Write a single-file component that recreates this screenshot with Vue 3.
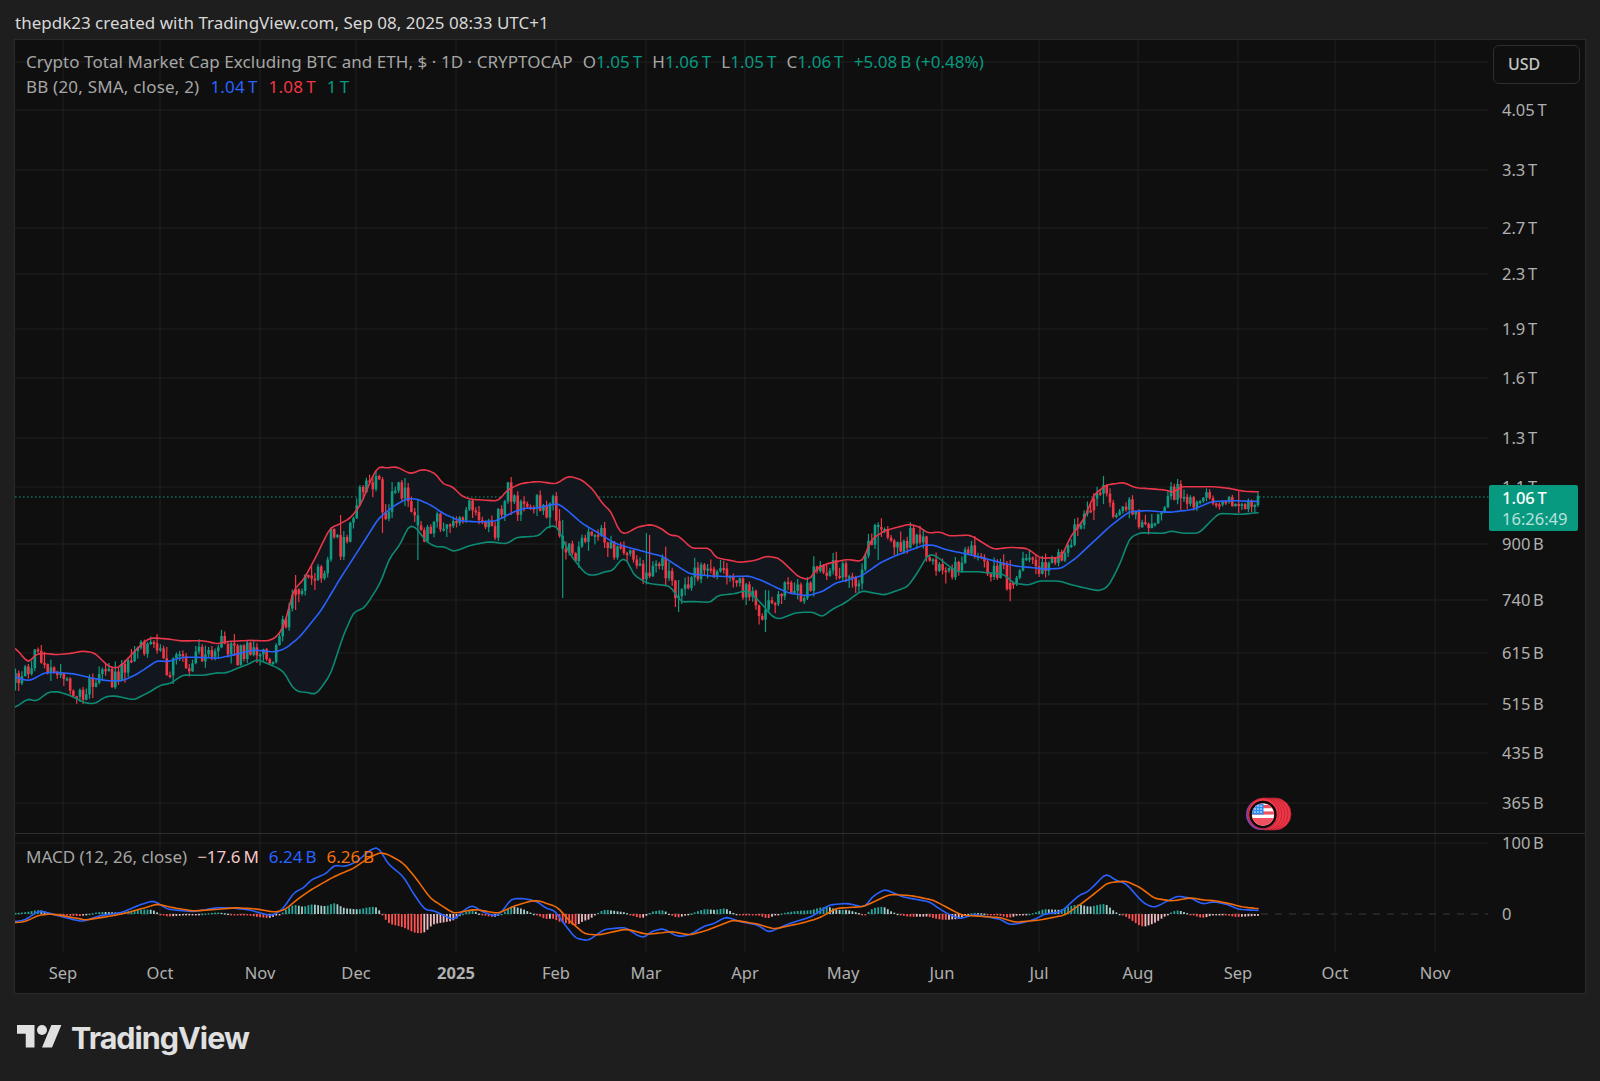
<script setup>
const GRID_X = [63, 160, 260, 356, 456, 556, 646, 745, 843, 942, 1039, 1138, 1238, 1335, 1435]
const MONTHS = ['Sep', 'Oct', 'Nov', 'Dec', '2025', 'Feb', 'Mar', 'Apr', 'May', 'Jun', 'Jul', 'Aug', 'Sep', 'Oct', 'Nov']
const timeLabels = GRID_X.map((x, i) => ({ x, t: MONTHS[i], bold: MONTHS[i] === '2025' }))
const GRID_Y = [62, 110, 170, 228, 274, 329, 378, 438, 487, 544, 600, 653, 704, 753, 803, 843]
const priceLabels = [
  [110, '4.05\u202FT'], [170, '3.3\u202FT'], [228, '2.7\u202FT'], [274, '2.3\u202FT'], [329, '1.9\u202FT'], [378, '1.6\u202FT'],
  [438, '1.3\u202FT'], [487, '1.1\u202FT'], [544, '900\u202FB'], [600, '740\u202FB'], [653, '615\u202FB'], [704, '515\u202FB'],
  [753, '435\u202FB'], [803, '365\u202FB'], [843, '100\u202FB'], [914, '0']
].map(([y, t]) => ({ y, t }))

// Curves are read off three crops of the reference and mapped back to page pixels.
function stitch(a, ax, ay, b, bx, by, c, cx, cy) {
  const m = (pts, ox, oy) => pts.map(([x, y]) => [ox + x / 2.8, oy + y / 3])
  return [
    ...m(a, ax, ay).filter(p => p[0] < 540),
    ...m(b, bx, by).filter(p => p[0] >= 540 && p[0] < 1040),
    ...m(c, cx, cy).filter(p => p[0] >= 1040)
  ]
}
const price = (a, b, c) => stitch(a, 0, 440, b, 540, 440, c, 1040, 450)
const osc = (a, b, c) => stitch(a, 0, 820, b, 540, 820, c, 1040, 780)

const upperPts = price(
  [[42,622],[60,645],[80,670],[100,642],[120,640],[160,644],[200,640],[230,633],[265,638],[285,660],[305,680],[330,685],[350,665],[380,630],[410,600],[425,593],[470,597],[510,603],[570,602],[610,612],[630,605],[700,601],[750,603],[770,595],[790,570],[810,505],[820,450],[850,420],[880,360],[925,262],[940,258],[980,235],[1010,195],[1040,115],[1060,78],[1080,84],[1110,80],[1150,102],[1185,87],[1220,100],[1240,133],[1265,138],[1295,170],[1320,178],[1395,183],[1420,150],[1460,130],[1500,125],[1540,130]],
  [[0,125],[45,132],[80,108],[115,118],[150,150],[175,192],[200,215],[222,277],[240,282],[270,262],[310,253],[340,265],[365,288],[385,285],[425,325],[480,325],[488,352],[560,367],[600,362],[635,348],[670,355],[725,412],[755,420],[775,385],[800,372],[860,358],[905,365],[925,300],[965,272],[1035,252],[1065,262],[1085,280],[1120,275],[1145,288],[1205,285],[1270,328],[1315,322],[1365,325],[1399,353]],
  [[0,325],[60,322],[85,260],[125,205],[150,135],[185,105],[235,97],[265,113],[355,120],[375,130],[390,110],[485,110],[530,115],[570,124],[622,126]]
)
const midPts = price(
  [[42,708],[60,718],[85,722],[125,698],[160,697],[210,702],[260,715],[300,722],[340,723],[380,705],[440,662],[470,665],[510,652],[560,652],[610,655],[660,643],[710,630],[770,636],[800,625],[840,590],[900,510],[950,420],[1010,320],[1060,235],[1100,200],[1140,175],[1170,178],[1210,197],[1240,220],[1285,242],[1340,246],[1390,243],[1430,220],[1465,205],[1510,204]],
  [[0,202],[50,190],[70,205],[120,252],[165,280],[210,310],[250,323],[300,337],[345,350],[380,375],[420,402],[480,408],[530,410],[585,408],[625,423],[660,442],[700,460],[750,467],[790,455],[830,428],[870,418],[905,405],[950,370],[1000,345],[1075,315],[1100,315],[1140,330],[1200,343],[1280,365],[1330,378],[1399,385]],
  [[0,358],[60,355],[100,325],[150,275],[200,225],[250,185],[300,182],[365,187],[430,178],[480,155],[540,152],[622,155]]
)
const lowerPts = price(
  [[42,803],[80,775],[100,786],[135,756],[165,755],[200,768],[235,788],[265,792],[295,770],[320,767],[375,780],[420,755],[450,735],[480,730],[510,705],[570,706],[610,698],[630,700],[700,670],[720,658],[770,680],[795,695],[820,745],[840,758],[850,755],[885,764],[925,705],[960,590],[990,516],[1020,505],[1065,430],[1090,355],[1120,315],[1145,255],[1165,262],[1195,307],[1225,322],[1240,318],[1270,335],[1320,315],[1370,305],[1420,312],[1445,292],[1510,288]],
  [[0,285],[20,260],[48,257],[60,290],[85,345],[130,405],[160,405],[180,395],[205,393],[225,358],[250,358],[255,400],[300,430],[365,438],[395,487],[420,484],[480,487],[495,467],[550,460],[580,450],[620,490],[650,530],[670,538],[715,518],[765,516],[790,532],[815,510],[855,488],[900,452],[930,458],[965,465],[1030,440],[1065,385],[1085,343],[1105,345],[1165,395],[1225,395],[1300,403],[1325,430],[1370,435],[1399,422]],
  [[0,393],[55,393],[90,405],[130,415],[165,423],[190,412],[225,340],[250,265],[280,248],[350,250],[365,242],[400,250],[445,250],[500,190],[560,193],[622,187]]
)
const centerPts = price(
  [[42,730],[60,705],[100,640],[130,690],[170,725],[225,770],[260,720],[290,690],[320,720],[360,660],[420,600],[445,640],[460,690],[500,660],[530,690],[570,630],[630,610],[665,650],[710,610],[760,680],[775,600],[810,510],[830,450],[870,390],[905,390],[930,270],[955,330],[985,240],[1020,130],[1060,110],[1075,240],[1100,150],[1135,160],[1165,270],[1190,290],[1215,230],[1265,280],[1320,180],[1345,270],[1385,270],[1420,150],[1445,200],[1500,180]],
  [[0,220],[40,190],[55,300],[90,350],[150,290],[165,280],[200,330],[245,320],[265,400],[300,400],[345,370],[380,480],[420,410],[465,385],[480,410],[515,370],[550,440],[585,450],[630,530],[650,480],[685,435],[705,465],[750,450],[770,400],[830,385],[895,415],[910,350],[945,265],[1000,330],[1040,280],[1075,310],[1110,370],[1165,385],[1215,330],[1240,385],[1300,390],[1315,450],[1335,385],[1399,375]],
  [[0,350],[60,330],[85,260],[125,215],[180,120],[205,200],[240,150],[290,245],[325,195],[355,150],[390,110],[440,170],[465,130],[490,180],[530,150],[555,180],[620,145]]
)
const macdPts = osc(
  [[42,305],[70,300],[110,272],[140,280],[180,292],[230,305],[280,287],[340,278],[390,255],[430,242],[470,268],[540,275],[610,263],[660,265],[700,270],[760,288],[790,270],[825,215],[850,205],[870,180],[915,160],[935,135],[965,140],[1000,125],[1030,95],[1058,78],[1085,130],[1130,170],[1160,225],[1190,270],[1215,272],[1270,300],[1300,270],[1322,255],[1350,275],[1390,290],[1410,270],[1430,237],[1465,235],[1500,243]],
  [[0,250],[15,265],[40,270],[70,315],[100,355],[135,362],[180,328],[240,322],[270,345],[295,355],[305,337],[345,325],[385,350],[420,345],[460,318],[490,310],[520,290],[560,305],[610,315],[640,337],[700,310],[760,290],[810,255],[860,250],[910,262],[930,230],[965,208],[1020,232],[1090,245],[1130,275],[1175,297],[1215,283],[1290,298],[1315,315],[1365,305],[1399,292]],
  [[0,405],[60,395],[110,345],[135,335],[185,280],[210,300],[240,310],[290,370],[320,383],[385,348],[425,355],[455,373],[485,365],[525,373],[555,388],[620,392]]
)
const signalPts = osc(
  [[42,308],[70,305],[110,285],[145,282],[180,288],[240,300],[300,290],[350,280],[400,265],[440,252],[480,262],[540,273],[610,268],[660,263],[720,267],[770,277],[800,268],[830,240],[870,210],[935,170],[990,145],[1030,115],[1065,97],[1090,105],[1130,130],[1165,175],[1205,235],[1270,280],[1330,268],[1395,280],[1440,258],[1490,242]],
  [[0,243],[50,262],[80,300],[125,342],[165,345],[240,327],[300,343],[370,335],[420,345],[470,330],[540,300],[610,312],[655,327],[730,310],[780,295],[830,265],[905,260],[980,223],[1040,227],[1100,240],[1180,285],[1290,293],[1330,307],[1399,300]],
  [[0,420],[70,405],[130,360],[190,308],[240,303],[280,322],[320,355],[370,363],[425,353],[455,360],[490,362],[540,373],[560,380],[620,387]]
)

function at(pts, x) {
  if (x <= pts[0][0]) return pts[0][1]
  for (let i = 1; i < pts.length; i++) {
    if (x <= pts[i][0]) {
      const [x0, y0] = pts[i - 1]
      const [x1, y1] = pts[i]
      return y0 + ((y1 - y0) * (x - x0)) / (x1 - x0 || 1)
    }
  }
  return pts[pts.length - 1][1]
}

const STEP = 3.219
const days = []
for (let x = 15.5; x <= 1261; x += STEP) days.push(x)

function daily(pts) {
  const raw = days.map(x => at(pts, x))
  return raw.map((y, i) => (raw[Math.max(0, i - 1)] + 2 * y + raw[Math.min(raw.length - 1, i + 1)]) / 4)
}
const line = ys => ys.map((y, i) => `${days[i].toFixed(1)},${y.toFixed(1)}`).join(' ')

const upY = daily(upperPts)
const midY = daily(midPts)
const lowY = daily(lowerPts)
const upperLine = line(upY)
const midLine = line(midY)
const lowerLine = line(lowY)
const bandFill = upperLine + ' ' + lowY.map((y, i) => `${days[i].toFixed(1)},${y.toFixed(1)}`).reverse().join(' ')

const macdY = daily(macdPts)
const signalY = daily(signalPts)
const macdLine = line(macdY)
const signalLine = line(signalY)

// Fixed-seed noise so the candles come out the same on every run.
let seed = 2025
function rnd() {
  seed = (seed * 1664525 + 1013904223) % 4294967296
  return seed / 4294967296
}
const SPIKES = [
  [417, 500, 560, 1], [562, 520, 598, 1], [679, 580, 612, 1], [765, 590, 632, 1],
  [384, 477, 533, 0], [340, 515, 560, 0], [295, 575, 610, 0], [511, 477, 515, 0],
  [651, 535, 577, 0], [648, 533, 577, 1], [877, 525, 560, 1], [1010, 560, 594, 0],
  [1094, 493, 520, 0], [1180, 483, 510, 0], [1239, 490, 513, 0]
]
let prev = at(centerPts, days[0])
const candles = days.map(x => {
  const vol = x > 1190 ? 0.5 : 1
  const close = at(centerPts, x) + (rnd() - 0.5) * 20 * vol
  const open = prev
  prev = close
  let top = Math.min(open, close)
  let bottom = Math.max(open, close)
  if (bottom - top < 2) bottom = top + 2
  let hi = top - rnd() * rnd() * 12 * vol - 0.5
  let lo = bottom + rnd() * rnd() * 12 * vol + 0.5
  let up = close < open
  const spike = SPIKES.find(s => Math.abs(s[0] - x) < STEP / 2)
  if (spike) {
    hi = Math.min(hi, spike[1])
    lo = Math.max(lo, spike[2])
    up = spike[3] === 1
  }
  return {
    x: +x.toFixed(1),
    hi: +hi.toFixed(1),
    lo: +lo.toFixed(1),
    top: +top.toFixed(1),
    h: +(bottom - top).toFixed(1),
    cls: up ? 'up' : 'down'
  }
})

const ZERO = 914
const hist = days.map((x, i) => {
  const v = signalY[i] - macdY[i]
  const last = i ? signalY[i - 1] - macdY[i - 1] : v
  const cls = v >= 0 ? (v >= last ? 'h-up' : 'h-up-fade') : v <= last ? 'h-down' : 'h-down-fade'
  return { x: +x.toFixed(1), y: +(v >= 0 ? ZERO - v : ZERO).toFixed(1), h: +Math.max(Math.abs(v), 1.4).toFixed(1), cls }
})
const stack = [1275, 1272, 1269, 1266]
</script>

<template>
  <div class="page">
    <header class="top">thepdk23 created with TradingView.com, Sep 08, 2025 08:33 UTC+1</header>

    <section class="frame">
      <svg class="chart" viewBox="15 40 1570 953" width="1570" height="953">
        <line v-for="y in GRID_Y" :key="'h' + y" class="grid" x1="15" x2="1488" :y1="y" :y2="y" />
        <line v-for="x in GRID_X" :key="'v' + x" class="grid" :x1="x" :x2="x" y1="40" y2="952" />
        <line class="divider" x1="15" x2="1585" y1="833.5" y2="833.5" />
        <line class="zero" x1="15" x2="1488" :y1="ZERO" :y2="ZERO" />
        <line class="last" x1="15" x2="1489" y1="497" y2="497" />

        <polygon class="band" :points="bandFill" />
        <g v-for="(c, i) in candles" :key="'c' + i" :class="c.cls">
          <line class="wick" :x1="c.x" :x2="c.x" :y1="c.hi" :y2="c.lo" />
          <rect class="body" :x="c.x - 1.3" :y="c.top" width="2.6" :height="c.h" />
        </g>
        <polyline class="curve upper" :points="upperLine" />
        <polyline class="curve lower" :points="lowerLine" />
        <polyline class="curve mid" :points="midLine" />

        <rect v-for="(b, i) in hist" :key="'b' + i" :class="b.cls" :x="b.x - 0.9" :y="b.y" width="1.8" :height="b.h" />
        <polyline class="curve mid" :points="macdLine" />
        <polyline class="curve signal" :points="signalLine" />

        <g class="marker">
          <circle v-for="cx in stack" :key="cx" class="stack" :cx="cx" cy="814" r="16" />
          <circle class="stack-edge" cx="1261.5" cy="814.5" r="15.5" />
          <circle class="stack" cx="1263.5" cy="813.5" r="15.5" />
          <circle class="ring" cx="1263" cy="814.5" r="12.5" />
          <clipPath id="flag-clip"><circle cx="1263" cy="814.5" r="11" /></clipPath>
          <g clip-path="url(#flag-clip)">
            <rect class="flag-white" x="1252" y="803" width="22" height="23" />
            <rect class="flag-red" x="1252" y="805" width="22" height="3.2" />
            <rect class="flag-red" x="1252" y="811.4" width="22" height="3.2" />
            <rect class="flag-red" x="1252" y="818" width="22" height="8" />
            <rect class="flag-blue" x="1252" y="803" width="11.5" height="11.5" />
            <g class="flag-white">
              <circle v-for="p in [[1255,806],[1258,806],[1261,806],[1255,809],[1258,809],[1261,809],[1255,812],[1258,812],[1261,812]]" :key="p.join()" :cx="p[0]" :cy="p[1]" r="0.8" />
            </g>
          </g>
        </g>

        <text v-for="l in priceLabels" :key="'p' + l.y" class="axis" x="1502" :y="l.y + 6">{{ l.t }}</text>
        <text v-for="l in timeLabels" :key="'t' + l.x + l.t" class="axis mid-anchor" :class="{ strong: l.bold }" :x="l.x" y="979">{{ l.t }}</text>
      </svg>

      <div class="legend legend-main">
        <div class="row row-title">
          <span>Crypto Total Market Cap Excluding BTC and ETH, $ · 1D · CRYPTOCAP</span>
          <span class="ohlc">O<b>1.05&#8239;T</b></span>
          <span class="ohlc">H<b>1.06&#8239;T</b></span>
          <span class="ohlc">L<b>1.05&#8239;T</b></span>
          <span class="ohlc">C<b>1.06&#8239;T</b></span>
          <b class="ohlc">+5.08&#8239;B (+0.48%)</b>
        </div>
        <div class="row row-bb">
          <span>BB (20, SMA, close, 2)</span>
          <span class="blue">1.04&#8239;T</span>
          <span class="red">1.08&#8239;T</span>
          <span class="green">1&#8239;T</span>
        </div>
      </div>
      <div class="legend legend-macd">
        <div class="row row-macd">
          <span>MACD (12, 26, close)</span>
          <span class="pink">−17.6&#8239;M</span>
          <span class="blue">6.24&#8239;B</span>
          <span class="orange">6.26&#8239;B</span>
        </div>
      </div>
      <div class="currency">USD</div>
      <div class="tag">
        <span class="tag-price">1.06&#8239;T</span>
        <span class="tag-time">16:26:49</span>
      </div>
    </section>

    <footer class="foot">
      <svg class="logo" viewBox="0 0 36 28" width="45" height="35">
        <path d="M14 22H7V11H0V4h14v18zM28 22h-8l7.5-18h8L28 22z" />
        <circle cx="20" cy="8" r="4" />
      </svg>
      <span class="brand">TradingView</span>
    </footer>
  </div>
</template>

<style scoped>
.page {
  width: 1600px;
  height: 1081px;
  background: #1e1e1e;
  overflow: hidden;
  font-family: "Noto Sans", "Liberation Sans", sans-serif;
}
.top {
  height: 39px;
  padding: 6px 0 0 15px;
  display: flex;
  align-items: center;
  box-sizing: border-box;
  font-size: 17px;
  color: #d8d8d8;
}
.frame {
  position: relative;
  width: 1570px;
  height: 953px;
  margin-left: 14px;
  border: 1px solid #2a2a2a;
  background: #0f0f0f;
}
.chart { display: block; }
.grid { stroke: #202020; stroke-width: 1; }
.divider { stroke: #2e2e2e; stroke-width: 1.2; }
.zero { stroke: #3a3a3a; stroke-width: 1; stroke-dasharray: 7 7; }
.last { stroke: #0c9c84; stroke-width: 1.2; stroke-dasharray: 1.5 2.5; }
.band { fill: #11171c; }
.curve { fill: none; stroke-width: 1.6; stroke-linejoin: round; stroke-linecap: round; }
.upper { stroke: #e8364a; }
.lower { stroke: #0d8a74; }
.mid { stroke: #2962ff; }
.signal { stroke: #f06a0a; }
.up .wick { stroke: #0f9a82; stroke-width: 1.2; }
.up .body { fill: #0f9a82; }
.down .wick { stroke: #f23645; stroke-width: 1.2; }
.down .body { fill: #f23645; }
.h-up { fill: #26a69a; }
.h-up-fade { fill: #a6d0cc; }
.h-down { fill: #ff5252; }
.h-down-fade { fill: #eebcc1; }
.stack { fill: #f23645; stroke: #b32336; stroke-width: 0.8; }
.stack-edge { fill: #8a3fa8; }
.ring { fill: #f23645; stroke: #0a0a0a; stroke-width: 2.4; }
.flag-white { fill: #fff; }
.flag-red { fill: #f0505f; }
.flag-blue { fill: #2b8cf0; }
.axis {
  font-family: "Noto Sans", "Liberation Sans", sans-serif;
  font-size: 16.5px;
  fill: #b0b0b0;
}
.mid-anchor { text-anchor: middle; }
.strong { font-weight: 700; }
.legend {
  position: absolute;
  left: 11px;
  font-size: 17px;
  color: #a6a6a6;
  line-height: 25px;
  white-space: nowrap;
}
.legend-main { top: 9px; }
.legend-macd { top: 804px; }
.row { display: flex; gap: 10px; }
.row-title { letter-spacing: 0.05px; }
.row-bb { letter-spacing: 0.2px; gap: 11px; }
.row-macd { gap: 10px; }
.ohlc b, b.ohlc { font-weight: 400; color: #089981; }
.blue { color: #2962ff; }
.red { color: #f23645; }
.green { color: #089981; }
.orange { color: #f57009; }
.pink { color: #f3c6c6; }
.currency {
  position: absolute;
  left: 1478px;
  top: 5px;
  width: 87px;
  height: 39px;
  box-sizing: border-box;
  border: 1px solid #2e2e2e;
  border-radius: 6px;
  padding-left: 14px;
  font-size: 16px;
  font-weight: 500;
  line-height: 37px;
  color: #c4c4c4;
  background: #0f0f0f;
}
.tag {
  position: absolute;
  left: 1474px;
  top: 445px;
  width: 89px;
  height: 46px;
  padding: 2px 0 0 13px;
  box-sizing: border-box;
  background: #089981;
  border-radius: 2px;
  font-size: 16.5px;
  line-height: 21px;
  display: flex;
  flex-direction: column;
}
.tag-price { color: #fff; font-weight: 500; }
.tag-time { color: #b9e2da; }
.foot {
  display: flex;
  align-items: flex-start;
  padding: 26px 0 0 17px;
  gap: 9px;
}
.logo { fill: #e0e0e0; flex: none; }
.brand {
  font-family: Inter, "Noto Sans", sans-serif;
  font-size: 30.5px;
  font-weight: 700;
  letter-spacing: -1px;
  line-height: 35px;
  color: #e0e0e0;
}
</style>
